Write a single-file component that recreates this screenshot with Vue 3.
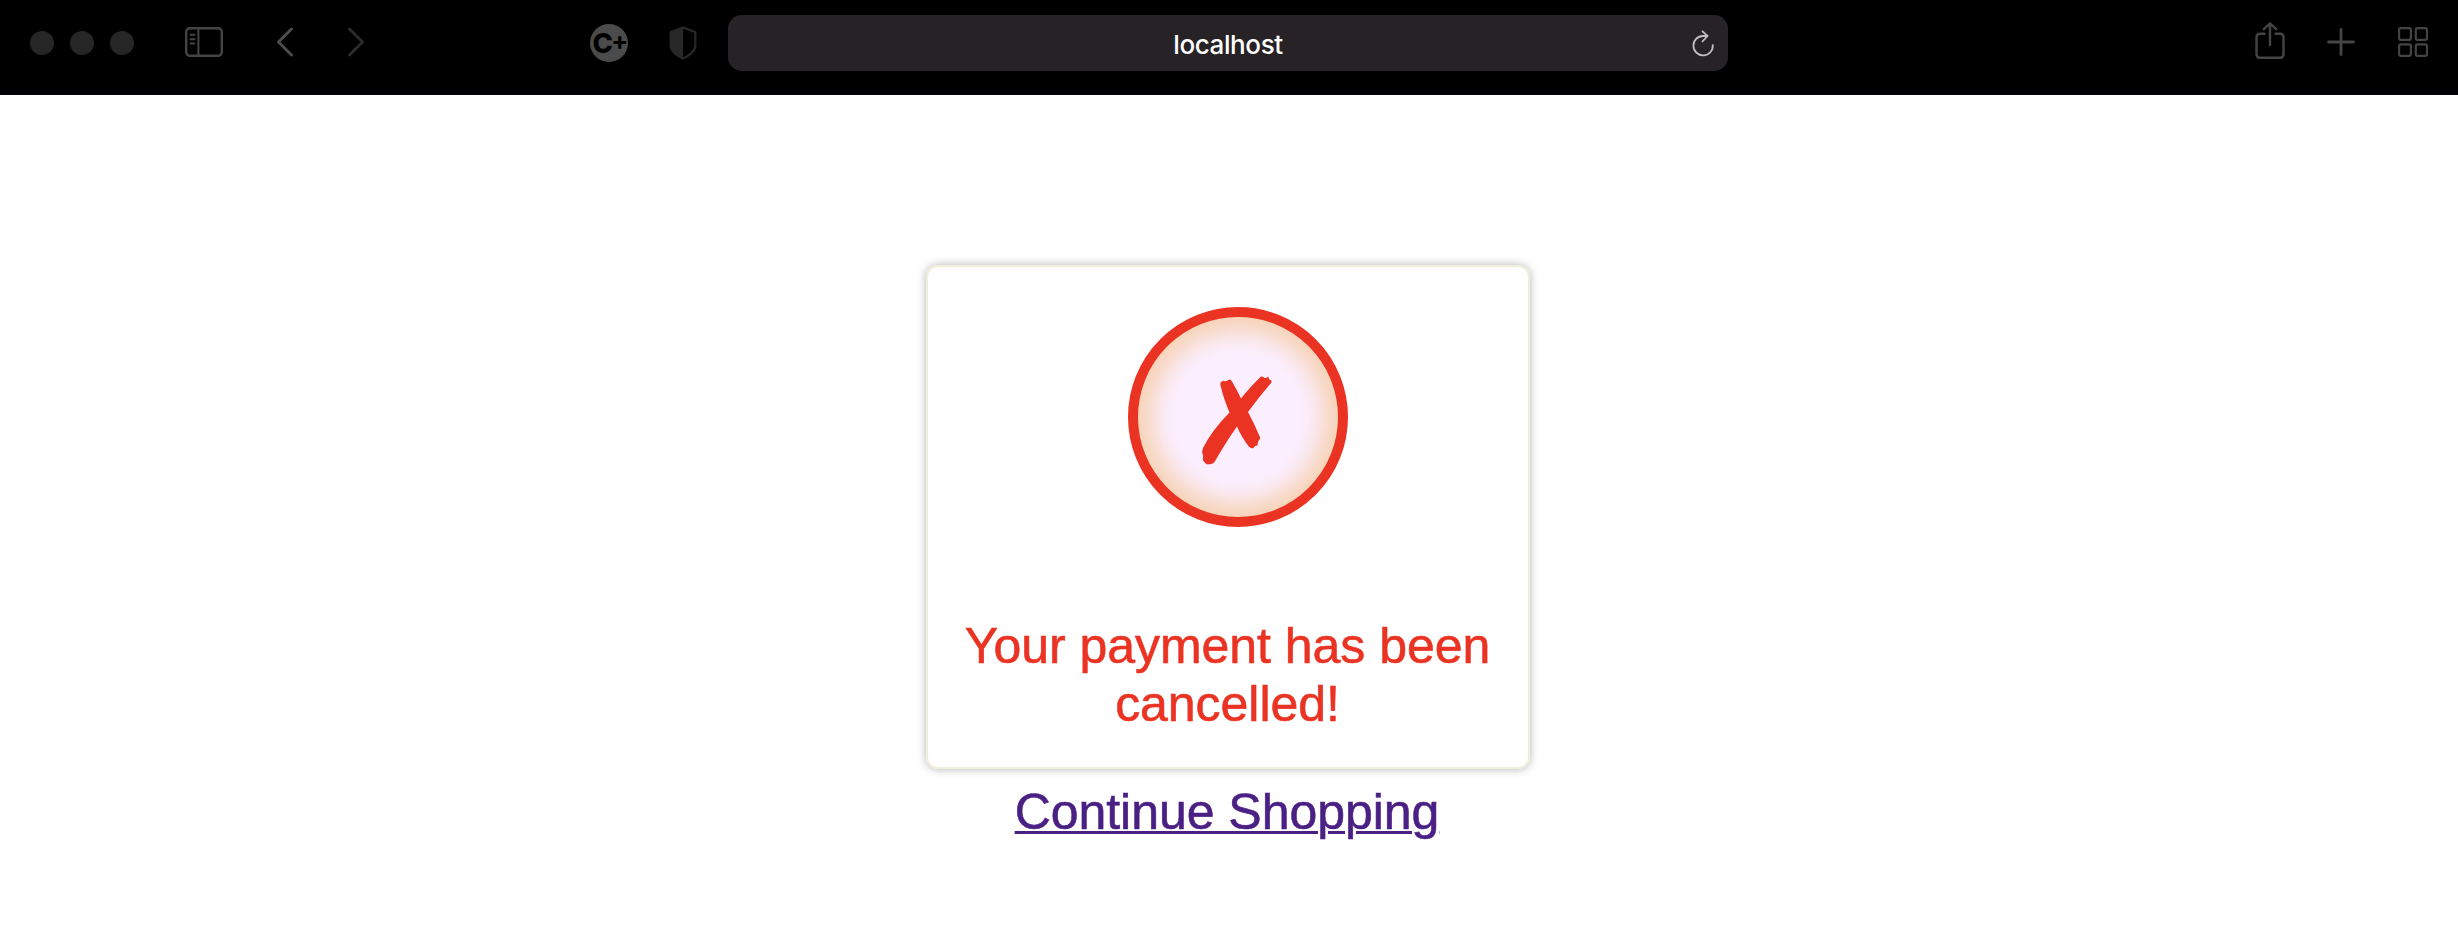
<script setup>
const lights = [1, 2, 3]
</script>

<template>
  <div class="window">
    <header class="toolbar">
      <div class="left">
        <div class="lights"><span v-for="n in lights" :key="n" class="light"></span></div>
        <svg class="sidebar" width="40" height="32" viewBox="0 0 40 32" fill="none" stroke="#444" stroke-width="2.4" stroke-linecap="round">
          <rect x="2.2" y="2.2" width="35.6" height="27.6" rx="3.5" />
          <path d="M14.4 2.5V29.5M6.5 8.7H10.5M6.5 13.2H10.5M6.5 17.5H10.5" stroke-width="2" />
        </svg>
        <svg class="back" width="18" height="30" viewBox="0 0 18 30" fill="none" stroke="#4d4d4d" stroke-width="2.9" stroke-linecap="round" stroke-linejoin="round">
          <path d="M15.5 2L2.5 15L15.5 28" />
        </svg>
        <svg class="forward" width="18" height="30" viewBox="0 0 18 30" fill="none" stroke="#2b2b2b" stroke-width="2.9" stroke-linecap="round" stroke-linejoin="round">
          <path d="M2.5 2L15.5 15L2.5 28" />
        </svg>
      </div>
      <div class="extensions">
        <svg width="38" height="38" viewBox="0 0 38 38">
          <circle cx="19" cy="19" r="19" fill="#4b4b4b" />
          <text class="mark" x="2.6" y="28.8" font-size="27.5">C</text>
          <text class="mark plus-mark" x="21.2" y="25.6" font-size="25">+</text>
        </svg>
        <svg class="shield" width="28" height="34" viewBox="0 0 28 34">
          <path d="M14 1.5L26.3 6V20C26.3 25 20 30 14 32.4C8 30 1.7 25 1.7 20V6Z" fill="none" stroke="#282828" stroke-width="2.2" stroke-linejoin="round" />
          <path d="M14 1V33C8 30 1 25 1 20V6Z" fill="#282828" />
        </svg>
      </div>
      <div class="address">
        <span class="host">localhost</span>
        <svg class="reload" width="24" height="28" viewBox="0 0 24 28" fill="none" stroke="#c0bec0" stroke-width="1.8" stroke-linecap="round" stroke-linejoin="round">
          <path d="M21.8 15.2A9.7 9.7 0 1 1 12 6H16.5M11.5 1.3L16.6 6L11.5 11.3" />
        </svg>
      </div>
      <div class="actions">
        <svg class="share" width="30" height="38" viewBox="0 0 30 38" fill="none" stroke="#444" stroke-width="2.4" stroke-linecap="round" stroke-linejoin="round">
          <path d="M9.5 11.7H5Q1.5 11.7 1.5 15.2V32.2Q1.5 35.7 5 35.7H25Q28.5 35.7 28.5 32.2V15.2Q28.5 11.7 25 11.7H20.5M15 23V1.5M8.8 7.2L15 1.5L21.2 7.2" />
        </svg>
        <svg class="plus" width="28" height="28" viewBox="0 0 28 28" fill="none" stroke="#444" stroke-width="2.8" stroke-linecap="round">
          <path d="M14 1.5V26.5M1.5 14H26.5" />
        </svg>
        <svg class="grid" width="30" height="30" viewBox="0 0 30 30" fill="none" stroke="#444" stroke-width="2.2">
          <rect x="1.1" y="1.1" width="11.8" height="11.8" rx="1.8" />
          <rect x="17.8" y="1.1" width="11.2" height="11.8" rx="1.8" />
          <rect x="1.1" y="17.3" width="11.8" height="11.6" rx="1.8" />
          <rect x="17.8" y="17.3" width="11.2" height="11.6" rx="1.8" />
        </svg>
      </div>
    </header>
    <main class="content">
      <section class="card">
        <div class="badge">
          <svg width="70" height="90" viewBox="0 0 70 90">
            <path fill="#eb3323" d="M18.3 8.5C18 6.2 20 5 22 4.7Q24 6 26 4Q28.5 2.6 30 5.5Q36 16 39 22.5Q49 10 57.5 2Q59.5 -0.5 62 1.5Q64 3 66 0.5L67.5 3.5L69.5 4.5L69.3 6.8Q57 21 46 36Q53 49 58.3 62L56 66L55.5 69.5L53 70L51.5 72Q49 73 46.8 70.5Q40 62 35 50.5Q24 66 12.5 86Q11 88.5 4.5 88.3L1 84.5L1 79L0 76L1 72Q10 54 27.5 36.5Q22 24 18.3 8.5Z" />
          </svg>
        </div>
        <p class="message">Your payment has been cancelled!</p>
      </section>
      <a class="continue">Continue Shopping</a>
    </main>
  </div>
</template>

<style>
body {
  margin: 0;
  background: #fff;
}
</style>

<style scoped>
.window {
  width: 2458px;
  height: 928px;
  overflow: hidden;
  background: #fff;
  font-family: "Liberation Sans", Arial, sans-serif;
}
svg {
  display: block;
  flex: none;
}
.toolbar {
  display: flex;
  align-items: flex-start;
  box-sizing: border-box;
  height: 95px;
  background: #000;
  border-bottom: 1px solid #08000a;
}
.left {
  display: flex;
  width: 590px;
}
.lights {
  display: flex;
  gap: 16px;
  margin: 31px 0 0 30px;
}
.light {
  width: 24px;
  height: 24px;
  border-radius: 50%;
  background: #262626;
}
.sidebar {
  margin: 26px 0 0 50px;
}
.back {
  margin: 27px 0 0 52px;
}
.forward {
  margin: 27px 0 0 53px;
}
.extensions {
  display: flex;
  width: 138px;
  padding-top: 24px;
}
.mark {
  font-family: Inter, sans-serif;
  font-weight: 800;
  fill: #000;
}
.plus-mark {
  font-weight: 700;
}
.shield {
  margin: 1.5px 0 0 41px;
}
.address {
  display: flex;
  align-items: center;
  box-sizing: border-box;
  width: 1000px;
  height: 56px;
  margin-top: 15px;
  padding: 2px 13px 0 37px;
  border-radius: 14px;
  background: #272226;
}
.host {
  flex: 1;
  padding-top: 2px;
  color: #fff;
  font-family: Inter, sans-serif;
  font-size: 26px;
  font-weight: 500;
  letter-spacing: -0.4px;
  line-height: 32px;
  text-align: center;
}
.actions {
  display: flex;
  margin-left: 527px;
}
.share {
  margin-top: 22px;
}
.plus {
  margin: 28px 0 0 41.5px;
}
.grid {
  margin: 27px 0 0 43.5px;
}
.content {
  display: flex;
  flex-direction: column;
  align-items: center;
  padding-top: 170px;
  font-size: 50px;
  line-height: 58px;
  letter-spacing: -0.04px;
  text-align: center;
  -webkit-text-stroke: 0.6px currentColor;
}
.card {
  display: flex;
  flex-direction: column;
  align-items: center;
  box-sizing: border-box;
  width: 604px;
  height: 504px;
  margin-right: 2px;
  padding-top: 40px;
  border: 2px solid #efeeda;
  border-radius: 12px;
  box-shadow: 0 0 10px rgba(0, 0, 0, 0.3);
}
.badge {
  display: grid;
  place-items: center;
  box-sizing: border-box;
  width: 220px;
  height: 220px;
  margin-left: 20px;
  padding: 6px 3px 0 0;
  border: 10px solid #eb3323;
  border-radius: 50%;
  background: radial-gradient(circle closest-side, #fbeefe 62%, #fbecf9 70%, #fae6e9 79%, #f8dccf 89%, #f7d4b9 100%);
}
.badge svg {
  margin-top: 2px;
}
.message {
  width: 560px;
  margin: 90px 1px 0 0;
  color: #eb3323;
}
.continue {
  margin: 14px 4px 0 0;
  color: #4b2084;
  text-decoration: underline;
  text-decoration-thickness: 3px;
  text-underline-offset: 2px;
}
</style>
